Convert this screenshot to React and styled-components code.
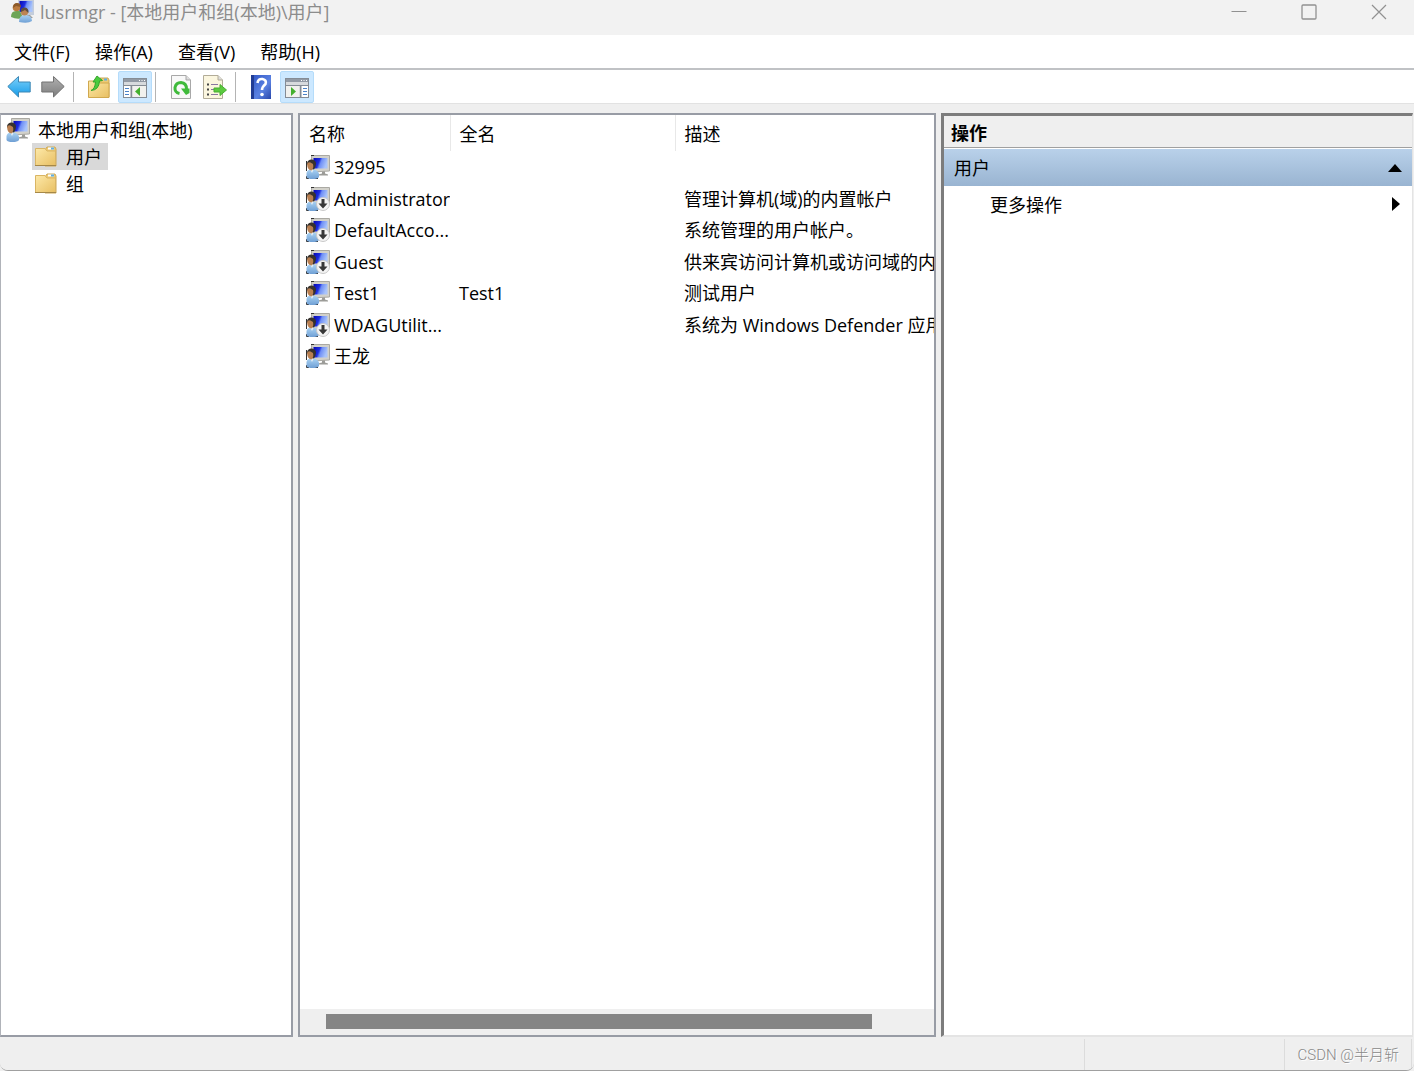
import styled, { createGlobalStyle } from "styled-components";

const users = [
  { name: "32995", fullName: "", description: "", disabled: false },
  { name: "Administrator", fullName: "", description: "管理计算机(域)的内置帐户", disabled: true },
  { name: "DefaultAcco...", fullName: "", description: "系统管理的用户帐户。", disabled: true },
  { name: "Guest", fullName: "", description: "供来宾访问计算机或访问域的内", disabled: true },
  { name: "Test1", fullName: "Test1", description: "测试用户", disabled: false },
  { name: "WDAGUtilit...", fullName: "", description: "系统为 Windows Defender 应用", disabled: true },
  { name: "王龙", fullName: "", description: "", disabled: false },
];

export default function App() {
  return (
    <>
      <GlobalStyle />
      <IconDefs />
      <Window>
        <TitleBar>
          <TitleIcon />
          <Title>lusrmgr - [本地用户和组(本地)\用户]</Title>
          <Caption aria-label="最小化">
            <svg width="16" height="16" viewBox="0 0 16 16">
              <path d="M0.5 7.5H15.5" stroke="#919191" />
            </svg>
          </Caption>
          <Caption aria-label="最大化">
            <svg width="16" height="16" viewBox="0 0 16 16">
              <rect x="1" y="1" width="14" height="14" rx="1" fill="none" stroke="#919191" strokeWidth="1.3" />
            </svg>
          </Caption>
          <Caption aria-label="关闭">
            <svg width="16" height="16" viewBox="0 0 16 16">
              <path d="M1 1L15 15M15 1L1 15" stroke="#919191" strokeWidth="1.2" />
            </svg>
          </Caption>
        </TitleBar>
        <MenuBar>
          <MenuItem>文件(F)</MenuItem>
          <MenuItem>操作(A)</MenuItem>
          <MenuItem>查看(V)</MenuItem>
          <MenuItem>帮助(H)</MenuItem>
        </MenuBar>
        <Toolbar>
          <ToolButton aria-label="后退"><ArrowIcon fill="url(#blueArrow)" stroke="#3d87b4" /></ToolButton>
          <ToolButton aria-label="前进"><ArrowIcon fill="url(#greyArrow)" stroke="#737373" flip /></ToolButton>
          <Separator />
          <ToolButton aria-label="上一级"><UpFolderIcon /></ToolButton>
          <ToggleButton aria-label="显示控制台树"><PaneIcon /></ToggleButton>
          <Separator />
          <ToolButton aria-label="刷新"><RefreshIcon /></ToolButton>
          <ToolButton aria-label="导出列表"><ExportIcon /></ToolButton>
          <Separator />
          <ToolButton aria-label="帮助"><HelpIcon /></ToolButton>
          <ToggleButton aria-label="显示操作窗格"><PaneIcon right /></ToggleButton>
        </Toolbar>
        <Panes>
          <TreePane>
            <TreeRoot><UserIcon />本地用户和组(本地)</TreeRoot>
            <TreeItem $selected><FolderIcon />用户</TreeItem>
            <TreeItem><FolderIcon />组</TreeItem>
          </TreePane>
          <ListPane>
            <ListArea>
              <Table>
                <colgroup>
                  <Col $width={150} />
                  <Col $width={225} />
                  <col />
                </colgroup>
                <thead>
                  <tr>
                    <Th>名称</Th>
                    <Th>全名</Th>
                    <Th>描述</Th>
                  </tr>
                </thead>
                <tbody>
                  {users.map((user) => (
                    <Row key={user.name}>
                      <Td>
                        <UserName><UserIcon disabled={user.disabled} outlined />{user.name}</UserName>
                      </Td>
                      <Td>{user.fullName}</Td>
                      <Td>{user.description}</Td>
                    </Row>
                  ))}
                </tbody>
              </Table>
            </ListArea>
            <ScrollTrack><ScrollThumb /></ScrollTrack>
          </ListPane>
          <ActionPane>
            <ActionTitle>操作</ActionTitle>
            <ActionGroup>
              用户
              <svg width="14" height="8" viewBox="0 0 14 8"><path d="M0 8L7 0L14 8Z" /></svg>
            </ActionGroup>
            <ActionItem>
              更多操作
              <svg width="14" height="16" viewBox="0 0 14 16"><path d="M4 0L12 7L4 14Z" /></svg>
            </ActionItem>
          </ActionPane>
        </Panes>
        <StatusBar>
          <StatusCell />
          <StatusCell $width={200} />
          <StatusCell $width={127}>CSDN @半月斩</StatusCell>
        </StatusBar>
      </Window>
    </>
  );
}

function IconDefs() {
  return (
    <Defs aria-hidden="true">
      <defs>
        <linearGradient id="blueArrow" x1="0" y1="0" x2="0" y2="1">
          <stop offset="0" stopColor="#7cd0fa" />
          <stop offset="1" stopColor="#159be8" />
        </linearGradient>
        <linearGradient id="greyArrow" x1="0" y1="0" x2="0" y2="1">
          <stop offset="0" stopColor="#b0b0b0" />
          <stop offset="1" stopColor="#7d7d7d" />
        </linearGradient>
        <linearGradient id="screen" x1="0" y1="0" x2="1" y2="0.3">
          <stop offset="0" stopColor="#0505b4" />
          <stop offset="0.45" stopColor="#1e2fe0" />
          <stop offset="0.6" stopColor="#6f8ff6" />
          <stop offset="1" stopColor="#a9c4fb" />
        </linearGradient>
        <linearGradient id="shirt" x1="0" y1="0" x2="0" y2="1">
          <stop offset="0" stopColor="#a9d2f3" />
          <stop offset="1" stopColor="#6f9fd4" />
        </linearGradient>
        <linearGradient id="folder" x1="0" y1="0" x2="1" y2="1">
          <stop offset="0" stopColor="#fde9a9" />
          <stop offset="1" stopColor="#e8bf62" />
        </linearGradient>
        <linearGradient id="book" x1="0" y1="0" x2="1" y2="1">
          <stop offset="0" stopColor="#2f55c4" />
          <stop offset="0.6" stopColor="#5b82e2" />
          <stop offset="1" stopColor="#2846aa" />
        </linearGradient>
      </defs>
    </Defs>
  );
}

function UserIcon({ disabled, outlined }) {
  return (
    <svg width="24" height="24" viewBox="0 0 24 24">
      <path d="M16 16H19V18.5L22 19.5V20.5H12V19.500L16 18.500Z" fill="#9c9c98" />
      <path d="M5.500 0.500H23.500V16L6 17Z" fill="#d2d1ca" stroke="#aaa9a3" />
      <path d="M7.500 3H21.500V13.500H7.500Z" fill="url(#screen)" />
      {outlined && <path d="M5 0.5H8M0.500 6V16M0.500 21V23.500H3M9 23.500H12" fill="none" stroke="#333" />}
      <path d="M0.500 22V18Q1 15 4 14.500H8Q12.500 15.500 13 19V22Q11.500 24 6.500 24Q1.500 24 0.500 22Z" fill="url(#shirt)" />
      <path d="M4 14L6 18L8 14Z" fill="#e6edf4" />
      <path d="M1 9Q1 5 5 4.500Q10 4.500 10 9Q9.500 13 8 14.500L5 14Z" fill="#37322d" />
      <path d="M1 9Q2 6.500 4.500 7.500L7 9Q8 13 5.500 15.500Q1.500 15 1 9Z" fill="#b97f50" />
      {disabled && (
        <>
          <circle cx="17" cy="17" r="6.500" fill="#f4f4f4" stroke="#c8c8c8" />
          <path d="M15.500 12H18.500V16.500H21.500L17 21.500L12.500 16.500H15.500Z" fill="#383838" />
        </>
      )}
    </svg>
  );
}

function TitleIcon() {
  return (
    <svg width="24" height="24" viewBox="0 0 24 24">
      <path d="M7 0H23V15L8 16Z" fill="#c4cddb" />
      <path d="M8.500 1H21.500V12H8.500Z" fill="url(#screen)" />
      <path d="M16 15H19L22 18H14Z" fill="#9b9b9b" />
      <path d="M0 17Q0 11 5 11H9L12 18Q6 20 0 17Z" fill="#6da557" />
      <circle cx="5.500" cy="7.500" r="3.800" fill="#bb7b40" />
      <path d="M2 8Q2 3 6 3Q10 3 10 7L5 6Z" fill="#8c5929" />
      <path d="M8 22Q8 15 14 15Q21 15 21 21Q17 24 8 22Z" fill="url(#shirt)" />
      <circle cx="13.500" cy="12" r="3.600" fill="#bd8352" />
      <path d="M10 12Q9 7.500 14 7.500Q18 8 17.500 13L14 10Z" fill="#604f3d" />
    </svg>
  );
}

function ArrowIcon({ fill, stroke, flip }) {
  return (
    <svg width="24" height="24" viewBox="0 0 24 24">
      <path
        d="M0.800 11.500L11.500 1.500V7H23.200V17H11.500V22Z"
        transform={flip ? "translate(24 0) scale(-1 1)" : undefined}
        fill={fill}
        stroke={stroke}
        strokeLinejoin="round"
      />
    </svg>
  );
}

function FolderIcon() {
  return (
    <svg width="22" height="22" viewBox="0 0 22 22">
      <path d="M10 4L12 1H20L21 3V20H10Z" fill="#edca73" stroke="#cda857" />
      <path d="M13 2.500H19" stroke="#fff" strokeWidth="2" />
      <path d="M16 2.500H19" stroke="#5eaee3" strokeWidth="2" />
      <path d="M0.5 2.500H10L12 5H20.500V19.500H0.5Z" fill="url(#folder)" stroke="#d9b564" />
      <path d="M0 19.500H21" stroke="#a58849" />
    </svg>
  );
}

function UpFolderIcon() {
  return (
    <svg width="24" height="24" viewBox="0 0 24 24">
      <path d="M11 5L13 3H21L22 5V22H11Z" fill="#edca73" stroke="#cda857" />
      <path d="M17 4.500H20" stroke="#5eaee3" strokeWidth="2" />
      <path d="M1.500 6H11L13 8H22V22.500H1.500Z" fill="url(#folder)" stroke="#d0a84f" />
      <path d="M4 15.500Q8 14 8.500 7H6L10 1L15.500 5.500L12.500 6Q12 15 4 15.500Z" fill="#4bcb3d" stroke="#35a52c" />
    </svg>
  );
}

function PaneIcon({ right }) {
  return (
    <svg width="24" height="22" viewBox="0 0 24 22">
      <rect x="0.5" y="1.500" width="23" height="19" fill="#fff" stroke="#858c95" />
      <path d="M1 2H23V5H1Z" fill="#929aa5" />
      <path d="M1 5H23V8H1Z" fill="#d7dadd" />
      <path d="M16 3.500H17M18.500 3.500H19.500M21 3.500H22" stroke="#fff" />
      <path d="M1 8.500H23" stroke="#858c95" />
      <path d={right ? "M15.500 9V20" : "M8.500 9V20"} stroke="#858c95" strokeWidth="2" />
      <path d={right ? "M1 9H14.500V20H1Z" : "M9.500 9H23V20H9.500Z"} fill="#f1f1ee" />
      <path d={right ? "M18 11.500H22M18 14.500H22M18 17.500H22" : "M2 11.500H6M2 14.500H6M2 17.500H6"} stroke="#4a82c9" />
      <path d={right ? "M6 10L11 14.500L6 19Z" : "M17 10L12 14.500L17 19Z"} fill="#43b02e" />
    </svg>
  );
}

function RefreshIcon() {
  return (
    <svg width="24" height="24" viewBox="0 0 24 24">
      <path d="M2.500 0.500H17L21.500 5V23.500H2.500Z" fill="#f8f8f8" stroke="#a8a8a8" />
      <path d="M17 0.500V5H21.500" fill="#ddd" stroke="#a8a8a8" />
      <path d="M10.500 18.500Q5.500 17.500 6 12.500Q7 7.500 12 7.500Q17.500 8 17.500 14" fill="none" stroke="#3fba3b" strokeWidth="3" />
      <path d="M12 13.500H20.500V18L17 20Z" fill="#3fba3b" />
    </svg>
  );
}

function ExportIcon() {
  return (
    <svg width="24" height="24" viewBox="0 0 24 24">
      <path d="M0.5 0.5H15L19.500 5V23.500H0.5Z" fill="#fbf6df" stroke="#b2ac98" />
      <path d="M15 0.500V5H19.500" fill="#ddd" stroke="#b2ac98" />
      <path d="M4 9.500H6M4 14.500H6M4 19.500H6" stroke="#444" strokeWidth="2" />
      <path d="M8 9.500H15M8 14.500H12M8 19.500H15" stroke="#8977a0" />
      <path d="M11 13H17V9.500L23.500 15L17 20.500V17H11Z" fill="#5cca3f" stroke="#48ae32" />
    </svg>
  );
}

function HelpIcon() {
  return (
    <svg width="24" height="26" viewBox="0 0 24 26">
      <rect x="2" y="1" width="20" height="24" fill="url(#book)" />
      <path d="M3.500 1V25" stroke="#213c94" strokeWidth="3" />
      <path d="M8.500 9Q9 4.500 13.500 5Q18 6 16.500 10Q13 13 13 16" fill="none" stroke="#fff" strokeWidth="2.600" />
      <circle cx="13" cy="20.500" r="1.800" fill="#fff" />
    </svg>
  );
}

const GlobalStyle = createGlobalStyle`
  * {
    box-sizing: border-box;
  }

  body {
    margin: 0;
    background-color: #efefef;
    color: #000;
    font-family: "Open Sans", "Noto Sans CJK SC", sans-serif;
    font-size: 18px;
    line-height: 26px;
  }

  button {
    border: 0;
    padding: 0;
    background: none;
    color: inherit;
    font: inherit;
  }

  svg {
    display: block;
    flex-shrink: 0;
  }
`
const Defs = styled.svg`
  width: 0;
  height: 0;
  position: absolute;
`
const Window = styled.div`
  display: flex;
  flex-direction: column;
  height: 100vh;
  overflow: hidden;
  border-bottom: 1px solid #a0a0a0;
  border-radius: 0 0 8px 8px;
`
const TitleBar = styled.header`
  display: flex;
  align-items: center;
  height: 35px;
  padding: 0 0 11px 11px;
  background-color: #f2f2f2;
  color: #8c8c8c;
`
const Title = styled.h1`
  flex: 1;
  margin: 0 0 0 5px;
  font-size: 18px;
  font-weight: 400;
  line-height: 24px;
`
const Caption = styled.button`
  display: flex;
  justify-content: center;
  align-items: center;
  width: 70px;
  height: 24px;
`
const MenuBar = styled.nav`
  display: flex;
  align-items: center;
  gap: 25px;
  height: 35px;
  padding: 0 14px;
  background-color: #fff;
  border-bottom: 2px solid #c0c2c5;
`
const MenuItem = styled.button`
  white-space: nowrap;
`
const Toolbar = styled.div`
  display: flex;
  align-items: center;
  height: 34px;
  padding: 1px 0 0 2px;
  background-color: #fff;
  border-bottom: 1px solid #e2e2e2;
`
const ToolButton = styled.button`
  display: flex;
  justify-content: center;
  align-items: center;
  width: 34px;
  height: 32px;
`
const ToggleButton = styled(ToolButton)`
  margin-left: 2px;
  padding-top: 2px;
  background-color: #cce8ff;
  border: 1px solid #b5dcfa;
  border-radius: 2px;
`
const Separator = styled.div`
  width: 1px;
  height: 30px;
  margin: 0 8px 0 3px;
  background-color: #b4b4b4;
`
const Panes = styled.main`
  flex: 1;
  display: grid;
  grid-template-columns: 293px minmax(0, 1fr) 473px;
  column-gap: 5px;
  min-height: 0;
  padding-top: 9px;
`
const TreePane = styled.section`
  padding-top: 1px;
  background-color: #fff;
  border: 2px solid #989ca5;
  border-left: 1px solid #b0b3b9;
`
const TreeRoot = styled.div`
  display: flex;
  align-items: center;
  gap: 8px;
  height: 27px;
  padding-left: 5px;
`
const TreeItem = styled.div`
  display: flex;
  align-items: center;
  gap: 9px;
  width: max-content;
  height: 27px;
  margin-left: 31px;
  padding: 0 6px 0 3px;
  background-color: ${(props) => (props.$selected ? "#d9d9d9" : "transparent")};
`
const ListPane = styled.section`
  display: flex;
  flex-direction: column;
  min-width: 0;
  background-color: #fff;
  border: 2px solid #989ca5;
`
const ListArea = styled.div`
  flex: 1;
  overflow: hidden;
`
const Table = styled.table`
  width: 100%;
  border-collapse: collapse;
  table-layout: fixed;
`
const Col = styled.col`
  width: ${(props) => props.$width}px;
`
const Th = styled.th`
  height: 36px;
  padding: 2px 0 0 9px;
  border-right: 1px solid #e8e8e8;
  font-weight: 400;
  text-align: left;

  &:last-child {
    border-right: 0;
  }
`
const Row = styled.tr`
  height: 32px;

  &:nth-child(even) {
    height: 31px;
  }
`
const Td = styled.td`
  padding: 0 0 0 9px;
  overflow: hidden;
  white-space: nowrap;

  &:first-child {
    padding-left: 6px;
  }
`
const UserName = styled.div`
  display: flex;
  align-items: center;
  gap: 4px;
`
const ScrollTrack = styled.div`
  height: 26px;
  padding: 5px 62px 6px 26px;
  background-color: #efefef;
`
const ScrollThumb = styled.div`
  height: 15px;
  background-color: #858585;
`
const ActionPane = styled.section`
  margin-right: 1px;
  background-color: #fff;
  border-style: solid;
  border-width: 3px 1px 2px 3px;
  border-color: #7c7c7c #e4e4e4 #e4e4e4 #7c7c7c;
`
const ActionTitle = styled.h2`
  height: 32px;
  margin: 0 0 1px;
  padding-left: 7px;
  background-color: #efefef;
  border-bottom: 1px solid #a0a0a0;
  font-size: 18px;
  font-weight: 700;
  line-height: 34px;
`
const ActionGroup = styled.button`
  display: flex;
  justify-content: space-between;
  align-items: center;
  width: 100%;
  height: 37px;
  padding: 0 10px;
  background-image: linear-gradient(#b9d1ea, #99b4d1);
`
const ActionItem = styled(ActionGroup)`
  padding: 0 10px 0 46px;
  background-image: none;
`
const StatusBar = styled.footer`
  display: flex;
  height: 33px;
  padding: 2px 2px 0 0;
  background-color: #efefef;
`
const StatusCell = styled.div`
  flex: ${(props) => (props.$width ? `0 0 ${props.$width}px` : 1)};
  padding-right: 12px;
  border-right: 1px solid #dcdcdc;
  color: #888;
  font-family: Roboto, "Noto Sans CJK SC", sans-serif;
  font-size: 15px;
  font-weight: 300;
  line-height: 32px;
  text-align: right;
  text-shadow: 1px 1px #fff;
`
